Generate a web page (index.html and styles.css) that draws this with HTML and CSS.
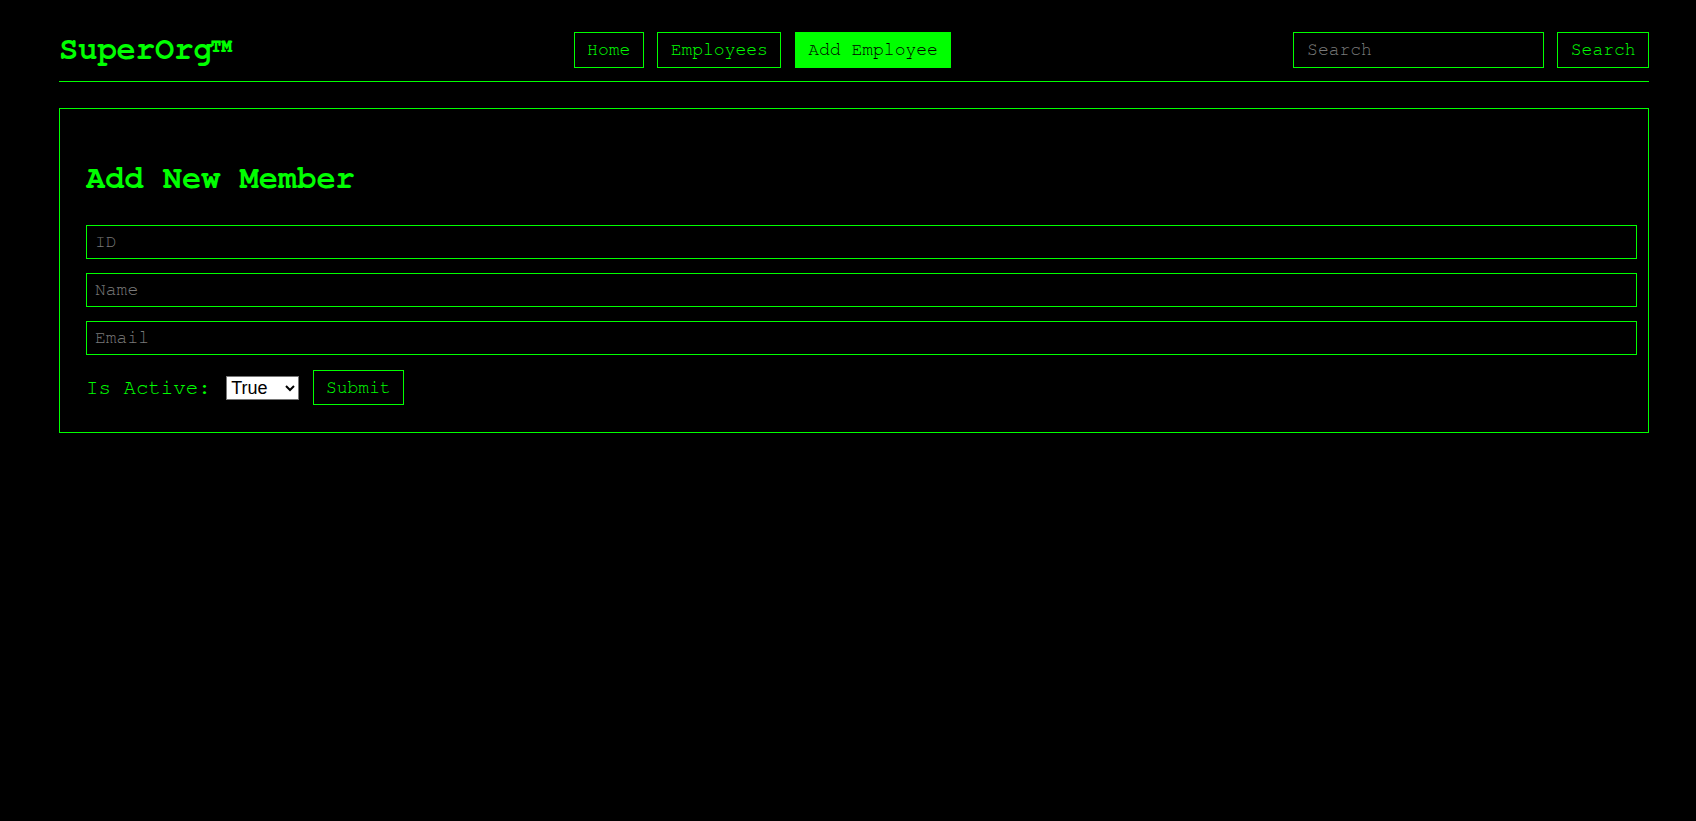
FILE: index.html
```html
<!DOCTYPE html>
<html lang="en">
<head>
<meta charset="utf-8">
<title>SuperOrg - Add Employee</title>
<link rel="stylesheet" href="styles.css">
</head>
<body>
<div class="page">
  <header class="header">
    <div class="logo">SuperOrg™</div>
    <nav class="nav">
      <a class="nav-btn" href="#">Home</a>
      <a class="nav-btn" href="#">Employees</a>
      <a class="nav-btn active" href="#">Add Employee</a>
    </nav>
    <form class="search">
      <input class="search-input" type="text" placeholder="Search">
      <button class="btn" type="button">Search</button>
    </form>
  </header>

  <section class="panel">
    <h1 class="title">Add New Member</h1>
    <form class="member-form">
      <input class="field" type="text" placeholder="ID">
      <input class="field" type="text" placeholder="Name">
      <input class="field" type="text" placeholder="Email">
      <div class="row">
        <label class="label" for="active">Is Active:</label>
        <select class="select" id="active">
          <option>True</option>
          <option>False</option>
        </select>
        <button class="btn submit" type="button">Submit</button>
      </div>
    </form>
  </section>
</div>
</body>
</html>
```

FILE: styles.css
```css
html, body {
  margin: 0;
  padding: 0;
  background: #000;
  color: #00ff00;
  font-family: "Nimbus Mono PS", "Nimbus Mono L", "FreeMono", "Courier 10 Pitch", "Courier New", "Liberation Mono", monospace;
}

.page {
  width: 1590px;
  margin-left: 59px;
}

.header {
  display: flex;
  align-items: center;
  justify-content: space-between;
  padding: 32px 0 13px;
  border-bottom: 1px solid #00ff00;
}

.logo {
  font-size: 32px;
  font-weight: bold;
  line-height: 36px;
  margin-top: -3px;
}

.nav {
  display: flex;
  gap: 13.6px;
}

.nav-btn,
.btn {
  display: inline-block;
  box-sizing: border-box;
  font-family: inherit;
  font-size: 18px;
  line-height: 20px;
  padding: 7px 12.4px;
  border: 1px solid #00ff00;
  background: #000;
  color: #00ff00;
  text-decoration: none;
  cursor: pointer;
}

.nav-btn.active {
  background: #00ff00;
  color: #000;
}

.search {
  display: flex;
  gap: 13.3px;
  margin: 0;
}

.search-input,
.field {
  box-sizing: border-box;
  font-family: inherit;
  font-size: 18px;
  background: #000;
  color: #00ff00;
  border: 1px solid #00ff00;
  outline: none;
}

.search-input {
  width: 251px;
  height: 36px;
  padding: 0 13px;
}

.search-input::placeholder,
.field::placeholder {
  color: #7a7a7a;
}

.panel {
  margin-top: 26px;
  border: 1px solid #00ff00;
  padding: 51px 11px 27px 26px;
}

.title {
  margin: 0 0 29px;
  font-size: 32px;
  line-height: 36px;
  font-weight: bold;
}

.member-form {
  display: flex;
  flex-direction: column;
  gap: 14px;
  margin: 0;
}

.field {
  display: block;
  width: 100%;
  height: 34px;
  padding: 0 8px;
}

.row {
  display: flex;
  align-items: center;
  margin-top: 1px;
}

.label {
  font-size: 20.8px;
  line-height: 24px;
}

.select {
  margin-left: 15.5px;
  font-family: "Liberation Sans", Arial, sans-serif;
  font-size: 18px;
  background: #fff;
  color: #000;
  border: 1px solid #767676;
  border-radius: 0;
  height: 24px;
  width: 73px;
}

.submit {
  margin-left: 13.3px;
  padding: 6.5px 12.4px;
}
```
